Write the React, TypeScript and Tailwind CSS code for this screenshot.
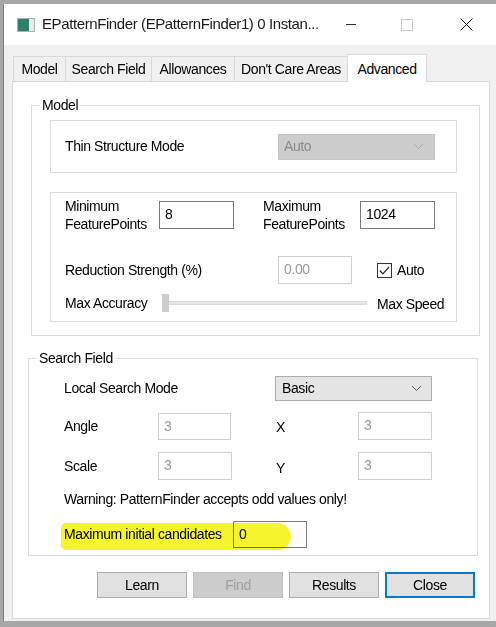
import type { ReactNode } from "react";

const font = "font-['Liberation_Sans',Arial,sans-serif]";

function TextBox({
	value,
	width,
	height = "h-[28px]",
	disabled,
}: {
	value: string;
	width: string;
	height?: string;
	disabled?: boolean;
}): ReactNode {
	return (
		<div
			className={`${width} ${height} shrink-0 bg-white border pl-[5px] pt-[3px] leading-[18px] ${
				disabled ? "border-[#cfcfcf] text-[#9a9a9a]" : "border-[#7a7a7a] text-black"
			}`}
		>
			{value}
		</div>
	);
}

function Chevron({ color }: { color: string }): ReactNode {
	return (
		<svg width="11" height="7" viewBox="0 0 11 7" className="shrink-0">
			<polyline points="1,1 5.5,5.5 10,1" fill="none" stroke={color} strokeWidth="1" />
		</svg>
	);
}

function Button({
	label,
	variant = "normal",
}: {
	label: string;
	variant?: "normal" | "disabled" | "default";
}): ReactNode {
	const styles = {
		normal: "bg-[#e1e1e1] border border-[#adadad] text-black",
		disabled: "bg-[#cccccc] border border-[#bfbfbf] text-[#a0a0a0]",
		default: "bg-[#e1e1e1] border-2 border-[#0078d7] text-black",
	}[variant];
	return (
		<div className={`w-[90px] h-[26px] flex items-center justify-center ${styles}`}>
			{label}
		</div>
	);
}

const tabs = [
	{ label: "Model", w: "w-[53px]" },
	{ label: "Search Field", w: "w-[87px]" },
	{ label: "Allowances", w: "w-[84px]" },
	{ label: "Don't Care Areas", w: "w-[114px]" },
];

export default function App(): ReactNode {
	return (
		<div
			className={`w-[496px] h-[627px] overflow-hidden bg-[#a7a7a7] pl-[3px] pt-[4px] ${font} text-[14px] tracking-[-0.4px] text-black`}
		>
			<div className="w-[500px] h-[617px] bg-[#f0f0f0] border-l border-[#7d7d7d] flex flex-col">
				{/* title bar */}
				<div className="h-[41px] bg-white flex items-center shrink-0">
					<div className="ml-[13px] w-[18px] h-[14px] border border-[#a8b4b0] bg-[#e8ecea] flex">
						<div className="w-[11px] h-full bg-[#2f7f6a]" />
					</div>
					<span className="ml-[7px] text-[15px] text-[#1a1a1a]">
						EPatternFinder (EPatternFinder1) 0 Instan...
					</span>
					<div className="ml-[27px] w-[10px] h-px bg-[#333]" />
					<div className="ml-[45px] w-[12px] h-[12px] border border-[#c8c8c8]" />
					<svg width="13" height="13" viewBox="0 0 13 13" className="ml-[47px]">
						<path d="M0.5 0.5 L12.5 12.5 M12.5 0.5 L0.5 12.5" stroke="#111" strokeWidth="1" />
					</svg>
				</div>

				{/* tabs */}
				<div className="flex items-end pl-[9px] mt-[8px] h-[28px] shrink-0">
					{tabs.map((t) => (
						<div
							key={t.label}
							className={`${t.w} h-[25px] -mr-px border border-b-0 border-[#d9d9d9] bg-[#f0f0f0] flex items-center justify-center text-[14px]`}
						>
							{t.label}
						</div>
					))}
					<div className="w-[80px] h-[28px] border border-b-0 border-[#d9d9d9] bg-white flex items-start justify-center pt-[4px] relative top-px z-10">
						Advanced
					</div>
				</div>

				{/* tab panel */}
				<div className="ml-[8px] w-[478px] h-[538px] bg-white border border-[#d9d9d9] flex flex-col shrink-0">
					{/* Model group */}
					<fieldset className="mt-[15px] ml-[18px] w-[449px] h-[239px] border border-[#dcdcdc] shrink-0">
						<legend className="ml-[8px] px-[2px] leading-[16px]">Model</legend>
						<div className="mt-[7px] ml-[18px] w-[407px] h-[53px] border border-[#dcdcdc] flex items-center pl-[14px]">
							<span className="w-[213px] shrink-0">Thin Structure Mode</span>
							<div className="w-[157px] h-[26px] bg-[#cccccc] border border-[#c4c4c4] flex items-center justify-between pl-[5px] pr-[10px] text-[#8a8a8a]">
								Auto
								<Chevron color="#a8a8a8" />
							</div>
						</div>
						<div className="mt-[19px] ml-[18px] w-[407px] h-[130px] border border-[#dcdcdc] flex flex-col pl-[14px]">
							<div className="mt-[4px] flex items-center">
								<span className="w-[94px] shrink-0 leading-[18px]">
									Minimum
									<br />
									FeaturePoints
								</span>
								<TextBox value="8" width="w-[75px]" />
								<span className="ml-[29px] w-[97px] shrink-0 leading-[18px]">
									Maximum
									<br />
									FeaturePoints
								</span>
								<TextBox value="1024" width="w-[75px]" />
							</div>
							<div className="mt-[23px] flex items-center">
								<span className="w-[213px] shrink-0">Reduction Strength (%)</span>
								<TextBox value="0.00" width="w-[74px]" disabled />
								<div className="ml-[25px] w-[15px] h-[15px] border border-[#333] bg-white flex items-center justify-center">
									<svg width="11" height="9" viewBox="0 0 11 9">
										<polyline points="0.8,4.5 3.8,7.8 10.2,0.8" fill="none" stroke="#222" strokeWidth="1.2" />
									</svg>
								</div>
								<span className="ml-[5px]">Auto</span>
							</div>
							<div className="mt-[9px] h-[20px] flex items-center">
								<span className="w-[97px] shrink-0">Max Accuracy</span>
								<div className="relative w-[205px] h-[20px] flex items-center">
									<div className="w-full h-[4px] bg-[#e7e7e7] border border-[#dcdcdc]" />
									<div className="absolute left-0 top-px w-[7px] h-[18px] bg-[#cdcdcd]" />
								</div>
								<span className="ml-[10px] mt-[3px]">Max Speed</span>
							</div>
						</div>
					</fieldset>

					{/* Search Field group */}
					<fieldset className="mt-[14px] ml-[15px] w-[450px] h-[206px] border border-[#dcdcdc] shrink-0 pl-[35px]">
						<legend className="-ml-[27px] px-[2px] leading-[16px]">Search Field</legend>
						<div className="mt-[10px] flex items-center">
							<span className="w-[211px] shrink-0">Local Search Mode</span>
							<div className="w-[157px] h-[25px] bg-[#e5e5e5] border border-[#adadad] flex items-center justify-between pl-[6px] pr-[9px]">
								Basic
								<Chevron color="#555" />
							</div>
						</div>
						<div className="mt-[11px] flex items-center">
							<span className="w-[94px] shrink-0">Angle</span>
							<TextBox value="3" width="w-[73px]" height="h-[27px]" disabled />
							<span className="ml-[45px] w-[82px] shrink-0 mt-[3px]">X</span>
							<TextBox value="3" width="w-[74px]" height="h-[28px]" disabled />
						</div>
						<div className="mt-[12px] flex items-center">
							<span className="w-[94px] shrink-0">Scale</span>
							<TextBox value="3" width="w-[74px]" disabled />
							<span className="ml-[44px] w-[82px] shrink-0 mt-[5px]">Y</span>
							<TextBox value="3" width="w-[74px]" disabled />
						</div>
						<div className="mt-[10px] leading-[18px]">
							Warning: PatternFinder accepts odd values only!
						</div>
						<div className="mt-[13px] relative flex items-center w-max">
							<span className="w-[169px] shrink-0">Maximum initial candidates</span>
							<TextBox value="0" width="w-[74px]" height="h-[27px]" />
							<div className="absolute -left-[3px] top-[2px] w-[230px] h-[27px] rounded-l-[6px] rounded-r-[16px] bg-[#f4f52c] mix-blend-multiply" />
						</div>
					</fieldset>

					{/* buttons */}
					<div className="mt-[16px] ml-[84px] flex gap-[6px]">
						<Button label="Learn" />
						<Button label="Find" variant="disabled" />
						<Button label="Results" />
						<Button label="Close" variant="default" />
					</div>
				</div>
			</div>
		</div>
	);
}
